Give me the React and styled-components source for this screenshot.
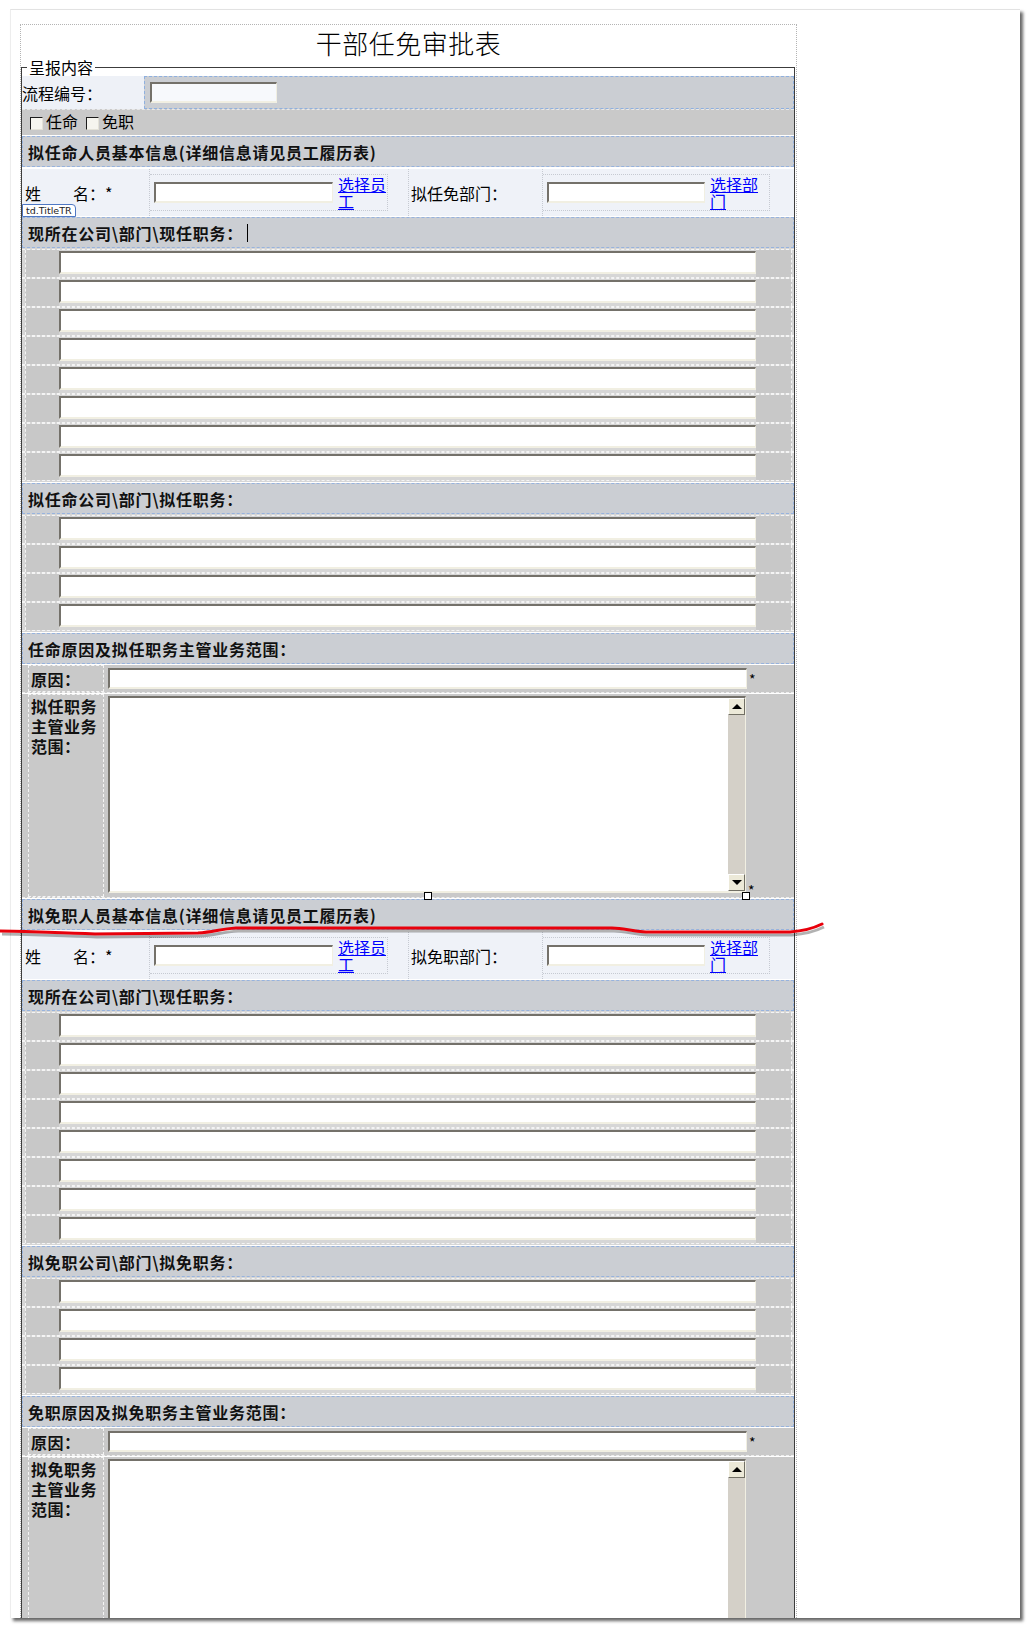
import React from 'react';
import styled, { createGlobalStyle } from 'styled-components';

const GlobalStyle = createGlobalStyle`
    html, body {
        margin: 0;
        padding: 0;
        background: #fff;
    }
    body {
        font-family: "Noto Sans CJK SC", "Liberation Sans", sans-serif;
        color: #000;
    }
`;

const LIST_ROWS_CURRENT = 8;
const LIST_ROWS_TARGET = 4;

const Page = styled.div`
    position: relative;
    width: 1031px;
    height: 1629px;
    overflow: hidden;
    padding: 9px 0 0 10px;
    box-sizing: border-box;
`;

const Sheet = styled.div`
    width: 1010px;
    height: 1609px;
    background: #fff;
    border-top: 1px solid #e2e2e2;
    border-left: 1px solid #ededed;
    box-shadow: 3px 3px 3px rgba(0, 0, 0, 0.6);
    overflow: hidden;
    padding: 14px 0 0 9px;
    box-sizing: border-box;
`;

const FormBox = styled.div`
    width: 777px;
    height: 100%;
    box-sizing: border-box;
    border: 1px dotted #b4b4b4;
    border-bottom: none;
`;

const Title = styled.div`
    height: 33px;
    line-height: 36px;
    font-size: 26px;
    font-weight: 300;
    text-align: center;
    letter-spacing: 0.5px;
`;

const Fieldset = styled.fieldset`
    margin: 0 1px 0 0;
    padding: 0;
    min-width: 0;
    border: 1px solid #3c3c3c;
    border-bottom: none;
`;

const Legend = styled.legend`
    font-size: 16px;
    line-height: 18px;
    padding: 0 2px;
    margin-left: 5px;
`;

const Input = styled.div`
    width: ${(p) => (p.$w ? `${p.$w}px` : 'auto')};
    flex: ${(p) => (p.$w ? 'none' : '1')};
    height: ${(p) => p.$h || 21}px;
    box-sizing: border-box;
    background: ${(p) => p.$bg || '#fff'};
    border-top: 2px solid #74716a;
    border-left: 2px solid #74716a;
    border-right: 1px solid #f1efe2;
    border-bottom: 2px solid #f1efe2;
    margin-top: ${(p) => p.$mt || 0}px;
`;

const NumberRow = styled.div`
    display: flex;
    height: 33px;
`;

const NumberLabel = styled.div`
    width: 122px;
    background: #eef1f7;
    font-size: 16px;
    display: flex;
    align-items: center;
`;

const NumberValue = styled.div`
    flex: 1;
    background: #cbced3;
    border: 1px dashed #8fb0df;
    display: flex;
    align-items: center;
    padding-left: 5px;
`;

const CheckRow = styled.div`
    display: flex;
    align-items: center;
    height: 26px;
    background: #c9c9c9;
    padding: 0 0 3px 8px;
    font-size: 16px;
    border-top: 1px dashed #e8e8e8;
    box-sizing: border-box;
`;

const CheckLabel = styled.label`
    display: flex;
    align-items: center;
    margin-right: 8px;
`;

const CheckBox = styled.span`
    width: 13px;
    height: 13px;
    box-sizing: border-box;
    background: #f6f5ef;
    border-top: 1px solid #1c1c1c;
    border-left: 1px solid #1c1c1c;
    border-right: 1px solid #e4e2d8;
    border-bottom: 1px solid #e4e2d8;
    margin: 4px 3px 0 0;
`;

const SectionHeader = styled.div`
    height: 31px;
    margin-top: 1px;
    box-sizing: border-box;
    background: #cbced3;
    border: 1px dashed #97b3de;
    padding-left: 5px;
    display: flex;
    align-items: center;
    font-size: 16px;
    font-weight: 700;
    letter-spacing: 0.75px;
    color: #111;
`;

const Caret = styled.span`
    display: inline-block;
    width: 1px;
    height: 18px;
    background: #000;
    margin-left: 4px;
`;

const NameRow = styled.div`
    position: relative;
    display: flex;
    align-items: stretch;
    height: 47px;
    margin-top: 2px;
    background: #eff2f8;
    font-size: 16px;
`;

const NameCell = styled.div`
    width: ${(p) => p.$w}px;
    box-sizing: border-box;
    padding-left: ${(p) => p.$pl || 0}px;
    display: flex;
    align-items: center;
    border-right: 1px dotted #c6cad2;
    white-space: pre;
`;

const PickCell = styled.div`
    width: ${(p) => p.$w}px;
    box-sizing: border-box;
    padding-left: 4px;
    display: flex;
    align-items: center;
    border: 1px dotted #c6cad2;
    border-width: 1px 1px 1px 0;
    margin: 5px 0;
`;

const PickLink = styled.a`
    width: 50px;
    margin-left: 5px;
    font-size: 16px;
    line-height: 17px;
    color: #0000ff;
    text-decoration: underline;
    cursor: pointer;
`;

const Tag = styled.span`
    position: absolute;
    left: 0;
    bottom: -1px;
    height: 13px;
    line-height: 12px;
    box-sizing: border-box;
    padding: 0 3px;
    font-family: "DejaVu Sans", sans-serif;
    font-size: 9.5px;
    color: #222;
    background: #fff;
    border: 1px solid #4f78c4;
    border-radius: 0 4px 0 0;
`;

const ListBlock = styled.div`
    background: #d6d6d6;
    padding: 1px 0 1px;
`;

const ListRow = styled.div`
    display: flex;
    height: 29px;
    box-sizing: border-box;
    border-top: 1px dashed #f4f4f4;
    border-bottom: 1px dashed #f4f4f4;
    padding: 0 2px 0 3px;
`;

const SideCell = styled.div`
    width: ${(p) => p.$w}px;
    background: #c8c8c8;
    border-${(p) => p.$side}: 1px dashed #f4f4f4;
`;

const AreaRow = styled.div`
    position: relative;
    display: flex;
    align-items: ${(p) => (p.$tall ? 'flex-start' : 'stretch')};
    height: ${(p) => p.$h}px;
    margin-top: 1px;
    background: #c9c9c9;
    padding-left: 6px;
    border-bottom: 1px dashed #eeeeee;
    box-sizing: border-box;
`;

const AreaLabel = styled.div`
    width: 76px;
    height: 100%;
    box-sizing: border-box;
    padding: ${(p) => (p.$tall ? '1px 4px 0 2px' : '0 2px')};
    border: 1px dashed #f4f4f4;
    display: flex;
    align-items: ${(p) => (p.$tall ? 'flex-start' : 'center')};
    font-size: 16px;
    font-weight: 700;
    line-height: 20px;
    letter-spacing: 0.5px;
    color: #111;
`;

const AreaField = styled.div`
    display: flex;
    align-items: ${(p) => (p.$tall ? 'flex-end' : 'center')};
    margin-left: 4px;
    padding-top: ${(p) => (p.$tall ? 2 : 0)}px;
`;

const Star = styled.span`
    font-size: 14px;
    line-height: 14px;
    margin-left: 2px;
    margin-bottom: ${(p) => (p.$low ? -4 : 0)}px;
`;

const TextBox = styled.div`
    display: flex;
    justify-content: flex-end;
    width: 638px;
    height: ${(p) => p.$h}px;
    box-sizing: border-box;
    background: #fff;
    border-top: 2px solid #74716a;
    border-left: 2px solid #74716a;
    border-right: 1px solid #f1efe2;
    border-bottom: 2px solid #f1efe2;
`;

const ScrollBar = styled.div`
    width: 17px;
    background: #d4d0c8;
    display: flex;
    flex-direction: column;
    justify-content: space-between;
`;

const ScrollButton = styled.div`
    height: 17px;
    box-sizing: border-box;
    background: #ece9d8;
    border-top: 1px solid #fff;
    border-left: 1px solid #fff;
    border-right: 1px solid #716f64;
    border-bottom: 1px solid #716f64;
    display: flex;
    align-items: center;
    justify-content: center;

    &::after {
        content: '';
        width: 0;
        height: 0;
        border-left: 5px solid transparent;
        border-right: 5px solid transparent;
        ${(p) => (p.$down ? 'border-top: 5px solid #000;' : 'border-bottom: 5px solid #000;')}
    }
`;

const Handle = styled.span`
    position: absolute;
    bottom: -3px;
    left: ${(p) => p.$x}px;
    width: 6px;
    height: 6px;
    background: #fff;
    border: 1px solid #000;
`;

const Scribble = styled.svg`
    position: absolute;
    left: 0;
    top: 0;
    pointer-events: none;
`;

const redPath =
    'M0 931 C 25 931, 55 933, 95 934 L 198 933 C 214 932, 220 929, 236 928 L 612 928 C 624 928, 630 931, 646 932 L 790 932 C 803 931, 812 929, 822 924';

const ListRows = ({ count }) => (
    <ListBlock>
        {Array.from({ length: count }).map((_, i) => (
            <ListRow key={i}>
                <SideCell $w={33} $side="left" />
                <Input $h={23} $mt={1} />
                <SideCell $w={35} $side="right" />
            </ListRow>
        ))}
    </ListBlock>
);

const PersonSection = ({ info, deptLabel, current, target, reason, scope, tag, caret, handles }) => (
    <>
        <SectionHeader>{info}</SectionHeader>
        <NameRow>
            <NameCell $w={128} $pl={3}>{'姓　　名：*'}</NameCell>
            <PickCell $w={238}>
                <Input $w={179} />
                <PickLink>选择员工</PickLink>
            </PickCell>
            <NameCell $w={21} />
            <NameCell $w={134} $pl={2}>{deptLabel}</NameCell>
            <PickCell $w={227}>
                <Input $w={158} />
                <PickLink>选择部门</PickLink>
            </PickCell>
            {tag && <Tag>td.TitleTR</Tag>}
        </NameRow>
        <SectionHeader>
            {current}
            {caret && <Caret />}
        </SectionHeader>
        <ListRows count={LIST_ROWS_CURRENT} />
        <SectionHeader>{target}</SectionHeader>
        <ListRows count={LIST_ROWS_TARGET} />
        <SectionHeader>{reason}</SectionHeader>
        <AreaRow $h={28}>
            <AreaLabel>原因：</AreaLabel>
            <AreaField>
                <Input $w={639} />
                <Star>*</Star>
            </AreaField>
        </AreaRow>
        <AreaRow $h={204} $tall>
            <AreaLabel $tall>{scope}</AreaLabel>
            <AreaField $tall>
                <TextBox $h={197}>
                    <ScrollBar>
                        <ScrollButton />
                        <ScrollButton $down />
                    </ScrollBar>
                </TextBox>
                <Star $low>*</Star>
            </AreaField>
            {handles && (
                <>
                    <Handle $x={402} />
                    <Handle $x={720} />
                </>
            )}
        </AreaRow>
    </>
);

const App = () => (
    <Page>
        <GlobalStyle />
        <Sheet>
            <FormBox>
                <Title>干部任免审批表</Title>
                <Fieldset>
                    <Legend>呈报内容</Legend>
                    <NumberRow>
                        <NumberLabel>流程编号：</NumberLabel>
                        <NumberValue>
                            <Input $w={127} $bg="#f7f9fc" />
                        </NumberValue>
                    </NumberRow>
                    <CheckRow>
                        <CheckLabel>
                            <CheckBox />
                            任命
                        </CheckLabel>
                        <CheckLabel>
                            <CheckBox />
                            免职
                        </CheckLabel>
                    </CheckRow>
                    <PersonSection
                        info="拟任命人员基本信息(详细信息请见员工履历表)"
                        deptLabel="拟任免部门："
                        current="现所在公司\部门\现任职务："
                        target="拟任命公司\部门\拟任职务："
                        reason="任命原因及拟任职务主管业务范围："
                        scope="拟任职务主管业务范围："
                        tag
                        caret
                        handles
                    />
                    <PersonSection
                        info="拟免职人员基本信息(详细信息请见员工履历表)"
                        deptLabel="拟免职部门："
                        current="现所在公司\部门\现任职务："
                        target="拟免职公司\部门\拟免职务："
                        reason="免职原因及拟免职务主管业务范围："
                        scope="拟免职务主管业务范围："
                    />
                </Fieldset>
            </FormBox>
        </Sheet>
        <Scribble width="1031" height="1629" viewBox="0 0 1031 1629">
            <path d={redPath} transform="translate(2 3)" fill="none" stroke="rgba(0,0,0,0.3)" strokeWidth="3" />
            <path d={redPath} fill="none" stroke="#e8000b" strokeWidth="3" strokeLinecap="round" />
        </Scribble>
    </Page>
);

export default App;
